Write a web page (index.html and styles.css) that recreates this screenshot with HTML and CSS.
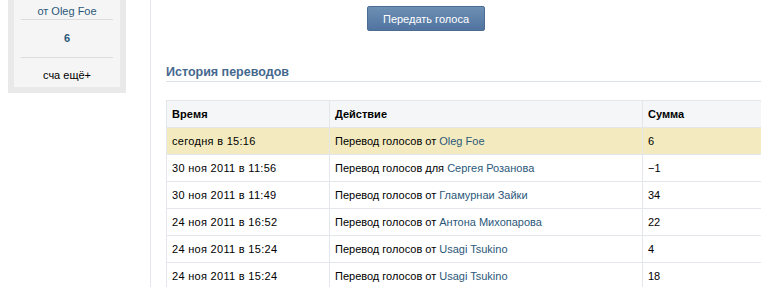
FILE: index.html
```html
<!DOCTYPE html>
<html lang="ru">
<head>
    <meta charset="UTF-8">
    <title>История переводов</title>
    <link rel="stylesheet" href="styles.css">
</head>
<body>
    <div class="page">
        <div class="side">
            <div class="side-box">
                <div class="side-inner">
                    <div class="side-row"><a href="#">от Oleg Foe</a></div>
                    <div class="side-row side-num">6</div>
                    <div class="side-row side-more">сча ещё+</div>
                </div>
            </div>
        </div>
        <div class="main">
            <div class="actions">
                <button class="btn">Передать голоса</button>
            </div>
            <h2 class="title">История переводов</h2>
            <table class="history">
                <tr>
                    <th class="col-time">Время</th>
                    <th class="col-action">Действие</th>
                    <th>Сумма</th>
                </tr>
                <tr class="new">
                    <td>сегодня в 15:16</td>
                    <td>Перевод голосов от <a href="#">Oleg Foe</a></td>
                    <td>6</td>
                </tr>
                <tr>
                    <td>30 ноя 2011 в 11:56</td>
                    <td>Перевод голосов для <a href="#">Сергея Розанова</a></td>
                    <td>&minus;1</td>
                </tr>
                <tr>
                    <td>30 ноя 2011 в 11:49</td>
                    <td>Перевод голосов от <a href="#">Гламурнаи Зайки</a></td>
                    <td>34</td>
                </tr>
                <tr>
                    <td>24 ноя 2011 в 16:52</td>
                    <td>Перевод голосов от <a href="#">Антона Михопарова</a></td>
                    <td>22</td>
                </tr>
                <tr>
                    <td>24 ноя 2011 в 15:24</td>
                    <td>Перевод голосов от <a href="#">Usagi Tsukino</a></td>
                    <td>4</td>
                </tr>
                <tr>
                    <td>24 ноя 2011 в 15:24</td>
                    <td>Перевод голосов от <a href="#">Usagi Tsukino</a></td>
                    <td>18</td>
                </tr>
            </table>
        </div>
    </div>
</body>
</html>
```

FILE: styles.css
```css
body {
    margin: 0;
    font-family: "Liberation Sans", Arial, sans-serif;
    font-size: 11px;
    color: #000;
    background-color: #fff;
}

a {
    color: #2b587a;
    text-decoration: none;
}

.page {
    display: flex;
    height: 287px;
    overflow: hidden;
}

.side {
    width: 150px;
    flex-shrink: 0;
}

.side-box {
    margin-left: 8px;
    width: 106px;
    padding: 0 6px 6px;
    background-color: #e9e9e9;
}

.side-inner {
    background-color: #f5f5f5;
    padding: 0 7px 4px;
}

.side-row {
    text-align: center;
    border-bottom: 1px solid #dcdcdc;
}

.side-row:first-child {
    height: 19px;
    line-height: 22px;
}

.side-num {
    height: 37px;
    line-height: 37px;
    font-weight: bold;
    color: #2b587a;
}

.side-more {
    border-bottom: none;
    height: 25px;
    line-height: 34px;
}

.main {
    flex: 1;
    border-left: 1px solid #e4e8ed;
    padding-left: 15px;
    overflow: hidden;
}

.actions {
    padding: 6px 0 0 201px;
}

.btn {
    width: 118px;
    height: 25px;
    padding: 0;
    font-family: inherit;
    font-size: 11px;
    color: #fff;
    background: linear-gradient(#6d8fb3, #5174a0);
    border: 1px solid #4b6d93;
    border-radius: 2px;
    cursor: pointer;
}

.title {
    margin: 34px 0 0;
    padding-bottom: 2px;
    font-size: 12.5px;
    font-weight: bold;
    color: #45688e;
    border-bottom: 1px solid #dae1e8;
}

.history {
    margin-top: 18px;
    width: 640px;
    border-collapse: collapse;
}

.history th,
.history td {
    height: 26px;
    padding: 0 0 0 5px;
    text-align: left;
    border: 1px solid #e3e6ea;
    white-space: nowrap;
}

.history th {
    background-color: #f5f6f8;
}

.col-time {
    width: 157px;
    letter-spacing: 0.1px;
}

.col-action {
    width: 307px;
}

.history td:first-child {
    letter-spacing: 0.3px;
}

.history tr.new td {
    background-color: #f3ebbf;
}
```
